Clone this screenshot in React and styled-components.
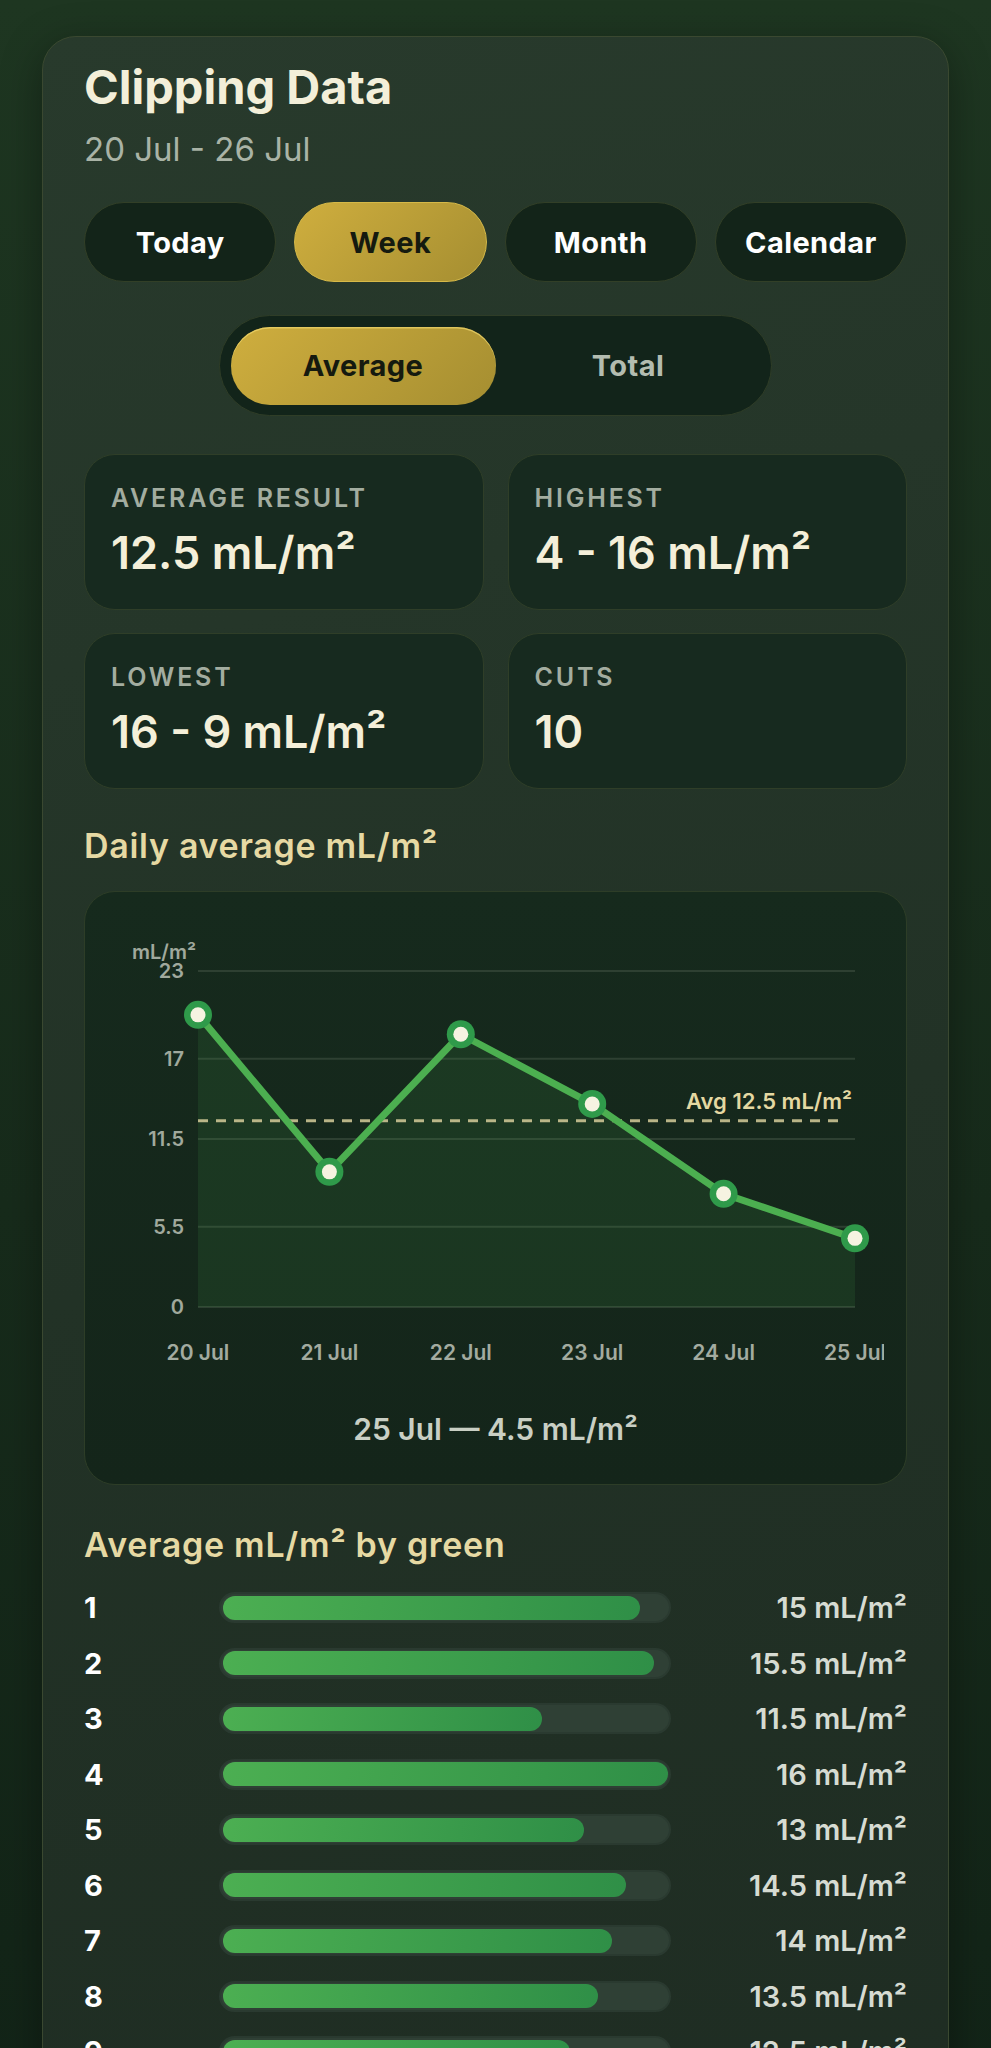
import React from "react";
import styled, { createGlobalStyle } from "styled-components";

const GlobalStyle = createGlobalStyle`
  html, body {
    margin: 0;
    padding: 0;
  }
  body {
    background: linear-gradient(180deg, #1e3621 0%, #172b1b 45%, #0f1f15 100%);
    min-height: 100vh;
    font-family: Inter, "Noto Sans", "Liberation Sans", sans-serif;
    -webkit-font-smoothing: antialiased;
  }
`;

const Page = styled.div`
  padding: 36px 42px 60px;
`;

const Card = styled.section`
  background: linear-gradient(165deg, #283a2c 0%, #223226 45%, #1d2a21 100%);
  border: 1.5px solid #3a4830;
  border-radius: 34px;
  padding: 22px 41px 40px;
  box-shadow: 0 10px 40px rgba(0, 0, 0, 0.35);
`;

const Title = styled.h1`
  margin: 0;
  font-size: 47px;
  line-height: 56px;
  font-weight: 700;
  color: #f3efd9;
`;

const DateRange = styled.div`
  margin-top: 14px;
  font-size: 33px;
  line-height: 40px;
  color: #a9b3a6;
`;

const Tabs = styled.div`
  display: grid;
  grid-template-columns: repeat(4, 1fr);
  gap: 18px;
  margin-top: 33px;
`;

const Tab = styled.div`
  height: 80px;
  box-sizing: border-box;
  border-radius: 999px;
  display: flex;
  align-items: center;
  justify-content: center;
  font-size: 29px;
  letter-spacing: 0.4px;
  font-weight: 700;
  color: ${(p) => (p.$active ? "#151a0f" : "#ffffff")};
  background: ${(p) =>
    p.$active ? "linear-gradient(135deg, #cfae3e 0%, #a58e31 100%)" : "#132419"};
  border: 1.5px solid ${(p) => (p.$active ? "#d6b948" : "#323f27")};
`;

const Toggle = styled.div`
  width: 553px;
  margin: 33px auto 0;
  box-sizing: border-box;
  padding: 10.5px;
  border-radius: 999px;
  background: #12241a;
  border: 1.5px solid #2f3d27;
  display: grid;
  grid-template-columns: 1fr 1fr;
`;

const ToggleOption = styled.div`
  height: 78px;
  border-radius: 999px;
  display: flex;
  align-items: center;
  justify-content: center;
  font-size: 29px;
  letter-spacing: 0.4px;
  font-weight: 700;
  color: ${(p) => (p.$active ? "#151a0f" : "#b3bcb0")};
  background: ${(p) =>
    p.$active ? "linear-gradient(135deg, #cfae3e 0%, #a58e31 100%)" : "transparent"};
  box-shadow: ${(p) => (p.$active ? "inset 0 1.5px 0 rgba(240, 215, 110, 0.7)" : "none")};
`;

const StatGrid = styled.div`
  display: grid;
  grid-template-columns: 1fr 1fr;
  column-gap: 24px;
  row-gap: 23px;
  margin-top: 38px;
`;

const StatCard = styled.div`
  height: 156px;
  box-sizing: border-box;
  background: #172a1f;
  border: 1.5px solid #2f3e28;
  border-radius: 31px;
  padding: 28px 26px 0;
`;

const StatLabel = styled.div`
  font-size: 25px;
  line-height: 30px;
  font-weight: 600;
  letter-spacing: 2.8px;
  color: #a3ada0;
  text-transform: uppercase;
`;

const StatValue = styled.div`
  margin-top: 14px;
  font-size: 45px;
  line-height: 52px;
  font-weight: 600;
  color: #f4efd9;
`;

const SectionTitle = styled.h2`
  margin: ${(p) => p.$top}px 0 0;
  font-size: 34px;
  line-height: 38px;
  font-weight: 600;
  letter-spacing: 0.7px;
  color: #e6d9a3;
`;

const ChartCard = styled.div`
  margin-top: 26px;
  height: 594px;
  box-sizing: border-box;
  background: linear-gradient(180deg, #162a1d 0%, #14251a 100%);
  border: 1.5px solid #2d3d27;
  border-radius: 31px;
  padding: 36.5px 19.5px 0;
  display: flex;
  flex-direction: column;
`;

const ChartSvg = styled.svg`
  display: block;
  font-family: Inter, "Noto Sans", sans-serif;
  font-weight: 600;
`;

const ChartFooter = styled.div`
  margin-top: 38px;
  text-align: center;
  font-size: 30px;
  line-height: 34px;
  font-weight: 600;
  color: #c9cfc4;
`;

const BarList = styled.div`
  margin-top: 16px;
`;

const BarRow = styled.div`
  display: grid;
  grid-template-columns: 135px 452px 1fr;
  align-items: center;
  height: 55.5px;
`;

const BarIndex = styled.div`
  font-size: 29px;
  font-weight: 700;
  color: #ffffff;
`;

const BarTrack = styled.div`
  height: 31px;
  box-sizing: border-box;
  border-radius: 999px;
  background: #2f4035;
  border: 2px solid #2a3a30;
  padding: 1.5px;
`;

const BarFill = styled.div`
  height: 100%;
  border-radius: 999px;
  background: linear-gradient(100deg, #4caf52 0%, #2f8f47 100%);
`;

const BarValue = styled.div`
  text-align: right;
  font-size: 29px;
  font-weight: 600;
  color: #d6dbd2;
`;

const periods = ["Today", "Week", "Month", "Calendar"];

const stats = [
  { label: "Average result", value: "12.5 mL/m²" },
  { label: "Highest", value: "4 - 16 mL/m²" },
  { label: "Lowest", value: "16 - 9 mL/m²" },
  { label: "Cuts", value: "10" },
];

const daily = [
  { day: "20 Jul", v: 20 },
  { day: "21 Jul", v: 9.25 },
  { day: "22 Jul", v: 18.67 },
  { day: "23 Jul", v: 13.9 },
  { day: "24 Jul", v: 7.75 },
  { day: "25 Jul", v: 4.7 },
];

const greens = [15, 15.5, 11.5, 16, 13, 14.5, 14, 13.5, 12.5, 14, 15, 13, 12, 14.5, 15.5, 13, 12.5, 14];

const fmt = (n) => `${n} mL/m²`;

function DailyChart() {
  const W = 779;
  const H = 445;
  const x0 = 93;
  const x1 = 750;
  const yBase = 378;
  const unit = 336 / 23;
  const y = (v) => yBase - v * unit;
  const step = (x1 - x0) / (daily.length - 1);
  const pts = daily.map((d, i) => [x0 + i * step, y(d.v)]);
  const line = pts.map((p, i) => `${i ? "L" : "M"}${p[0]},${p[1]}`).join(" ");
  const area = `${line} L${x1},${yBase} L${x0},${yBase} Z`;
  const ticks = [
    { v: 23, l: "23" },
    { v: 17, l: "17" },
    { v: 11.5, l: "11.5" },
    { v: 5.5, l: "5.5" },
    { v: 0, l: "0" },
  ];
  const avgY = 191.7;

  return (
    <ChartSvg width={W} height={H} viewBox={`0 0 ${W} ${H}`}>
      <text x="59" y="30" fontSize="20" fill="#a0a99d" textAnchor="middle">
        mL/m²
      </text>
      {ticks.map((t) => (
        <g key={t.l}>
          <line x1={x0} x2={x1} y1={y(t.v)} y2={y(t.v)} stroke="#2e4032" strokeWidth="2" />
          <text x="79" y={y(t.v) + 7} fontSize="20" fill="#a0a99d" textAnchor="end">
            {t.l}
          </text>
        </g>
      ))}
      <path d={area} fill="#4caf50" fillOpacity="0.12" />
      <line
        x1={x0}
        x2="741"
        y1={avgY}
        y2={avgY}
        stroke="#d6cc9a"
        strokeOpacity="0.85"
        strokeWidth="3"
        strokeDasharray="10 8"
      />
      <text x="747" y="180" fontSize="22" fill="#e4d8a2" textAnchor="end">
        Avg 12.5 mL/m²
      </text>
      <path d={line} fill="none" stroke="#4caf50" strokeWidth="7" strokeLinejoin="round" strokeLinecap="round" />
      {pts.map((p, i) => (
        <g key={i}>
          <circle cx={p[0]} cy={p[1]} r="14" fill="#2f9a4a" />
          <circle cx={p[0]} cy={p[1]} r="7.5" fill="#f6f3e1" />
        </g>
      ))}
      {daily.map((d, i) => (
        <text key={d.day} x={x0 + i * step} y="431" fontSize="21" fill="#a3aba0" textAnchor="middle">
          {d.day}
        </text>
      ))}
    </ChartSvg>
  );
}

export default function App() {
  const max = 16;
  return (
    <>
      <GlobalStyle />
      <Page>
        <Card>
          <Title>Clipping Data</Title>
          <DateRange>20 Jul - 26 Jul</DateRange>

          <Tabs>
            {periods.map((p) => (
              <Tab key={p} $active={p === "Week"}>
                {p}
              </Tab>
            ))}
          </Tabs>

          <Toggle>
            <ToggleOption $active>Average</ToggleOption>
            <ToggleOption>Total</ToggleOption>
          </Toggle>

          <StatGrid>
            {stats.map((s) => (
              <StatCard key={s.label}>
                <StatLabel>{s.label}</StatLabel>
                <StatValue>{s.value}</StatValue>
              </StatCard>
            ))}
          </StatGrid>

          <SectionTitle $top={38}>Daily average mL/m²</SectionTitle>
          <ChartCard>
            <DailyChart />
            <ChartFooter>25 Jul — 4.5 mL/m²</ChartFooter>
          </ChartCard>

          <SectionTitle $top={41}>Average mL/m² by green</SectionTitle>
          <BarList>
            {greens.map((v, i) => (
              <BarRow key={i}>
                <BarIndex>{i + 1}</BarIndex>
                <BarTrack>
                  <BarFill style={{ width: `${(v / max) * 100}%` }} />
                </BarTrack>
                <BarValue>{fmt(v)}</BarValue>
              </BarRow>
            ))}
          </BarList>
        </Card>
      </Page>
    </>
  );
}
